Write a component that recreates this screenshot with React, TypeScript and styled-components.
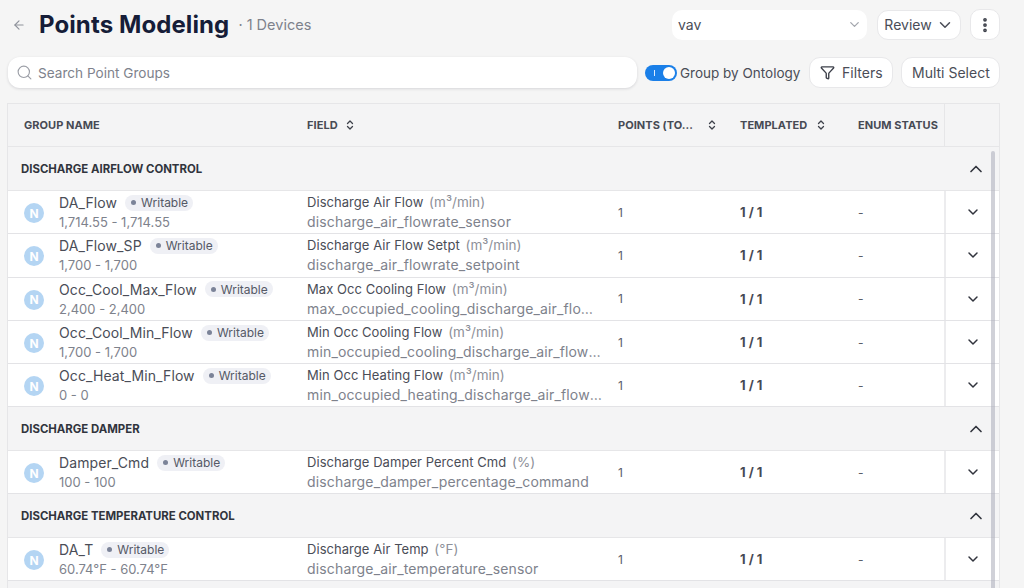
import React from "react";
import styled, { createGlobalStyle } from "styled-components";
import { ArrowLeft, ChevronDown, ChevronUp, ChevronsUpDown, Search, Funnel, EllipsisVertical } from "lucide-react";

const GlobalStyle = createGlobalStyle`
  html, body {
    margin: 0;
    padding: 0;
    height: 100%;
    background: #f5f5f5;
    font-family: Inter, "Noto Sans", "Liberation Sans", sans-serif;
    overflow: hidden;
  }
  * { box-sizing: border-box; }
`;

const groups = [
  {
    name: "DISCHARGE AIRFLOW CONTROL",
    rows: [
      { name: "DA_Flow", range: "1,714.55 - 1,714.55", field: "Discharge Air Flow", unit: "(m³/min)", key: "discharge_air_flowrate_sensor" },
      { name: "DA_Flow_SP", range: "1,700 - 1,700", field: "Discharge Air Flow Setpt", unit: "(m³/min)", key: "discharge_air_flowrate_setpoint" },
      { name: "Occ_Cool_Max_Flow", range: "2,400 - 2,400", field: "Max Occ Cooling Flow", unit: "(m³/min)", key: "max_occupied_cooling_discharge_air_flowrate_setpoint" },
      { name: "Occ_Cool_Min_Flow", range: "1,700 - 1,700", field: "Min Occ Cooling Flow", unit: "(m³/min)", key: "min_occupied_cooling_discharge_air_flowrate_setpoint" },
      { name: "Occ_Heat_Min_Flow", range: "0 - 0", field: "Min Occ Heating Flow", unit: "(m³/min)", key: "min_occupied_heating_discharge_air_flowrate_setpoint" },
    ],
  },
  {
    name: "DISCHARGE DAMPER",
    rows: [
      { name: "Damper_Cmd", range: "100 - 100", field: "Discharge Damper Percent Cmd", unit: "(%)", key: "discharge_damper_percentage_command" },
    ],
  },
  {
    name: "DISCHARGE TEMPERATURE CONTROL",
    rows: [
      { name: "DA_T", range: "60.74°F - 60.74°F", field: "Discharge Air Temp", unit: "(°F)", key: "discharge_air_temperature_sensor" },
    ],
  },
];

const App = () => {
  return (
    <Page>
      <GlobalStyle />
      <TopBar>
        <TitleArea>
          <ArrowLeft size={14} color="#8f939c" strokeWidth={2} />
          <Title>Points Modeling</Title>
          <DeviceCount>· 1 Devices</DeviceCount>
        </TitleArea>
        <TopActions>
          <SelectBox>
            <span>vav</span>
            <ChevronDown size={15} color="#a3a6ad" />
          </SelectBox>
          <ReviewButton>
            Review
            <ChevronDown size={18} color="#4a4d57" />
          </ReviewButton>
          <MoreButton>
            <EllipsisVertical size={18} color="#3d404a" strokeWidth={3} />
          </MoreButton>
        </TopActions>
      </TopBar>
      <SearchRow>
        <SearchBox>
          <Search size={17} color="#9b9ea6" strokeWidth={1.6} />
          <span>Search Point Groups</span>
        </SearchBox>
        <ToggleGroup>
          <Toggle>
            <ToggleMark />
            <ToggleKnob />
          </Toggle>
          Group by Ontology
        </ToggleGroup>
        <FilterButton>
          <Funnel size={15} color="#3d404a" strokeWidth={2.2} />
          Filters
        </FilterButton>
        <MultiButton>Multi Select</MultiButton>
      </SearchRow>
      <Table>
        <HeadRow>
          <HeadCell $first>GROUP NAME</HeadCell>
          <HeadCell>
            FIELD
            <SortIcon $gap={6} />
          </HeadCell>
          <HeadCell>
            POINTS (TO...
            <SortIcon $gap={13} />
          </HeadCell>
          <HeadCell>
            TEMPLATED
            <SortIcon />
          </HeadCell>
          <HeadCell>ENUM STATUS</HeadCell>
          <ActionHead />
        </HeadRow>
        {groups.map((group) => (
          <div key={group.name}>
            <GroupRow>
              <GroupName>{group.name}</GroupName>
              <ChevronUp size={20} color="#31343d" />
            </GroupRow>
            {group.rows.map((row) => (
              <DataRow key={row.name}>
                <NameCell>
                  <NBadge>N</NBadge>
                  <NameStack>
                    <NameLine>
                      <PointName>{row.name}</PointName>
                      <WritableTag>
                        <TagDot />
                        Writable
                      </WritableTag>
                    </NameLine>
                    <SubText>{row.range}</SubText>
                  </NameStack>
                </NameCell>
                <FieldCell>
                  <FieldLine>
                    {row.field} <Unit>{row.unit}</Unit>
                  </FieldLine>
                  <FieldKey>{row.key}</FieldKey>
                </FieldCell>
                <PlainCell>1</PlainCell>
                <BoldCell>1 / 1</BoldCell>
                <PlainCell>-</PlainCell>
                <ActionCell>
                  <ChevronDown size={16} color="#31343d" strokeWidth={2.2} />
                </ActionCell>
              </DataRow>
            ))}
          </div>
        ))}
        <GroupRow />
        <ScrollThumb />
      </Table>
    </Page>
  );
};

const SortIcon = ({ $gap = 8 }: { $gap?: number }) => (
  <SortWrap $gap={$gap}>
    <ChevronsUpDown size={12} color="#3d404a" strokeWidth={2.6} />
  </SortWrap>
);

const Page = styled.main`
  width: 1024px;
  height: 588px;
  overflow: hidden;
  background: #f5f5f5;
  padding: 9px 24px 0 8px;
  color: #31343d;
`;

const TopBar = styled.header`
  display: flex;
  justify-content: space-between;
  align-items: center;
  height: 31px;
`;

const TitleArea = styled.div`
  display: flex;
  align-items: center;
  padding-left: 4px;
`;

const Title = styled.h1`
  margin: 0 0 0 13px;
  font-size: 24px;
  font-weight: 700;
  letter-spacing: 0.1px;
  color: #161d38;
`;

const DeviceCount = styled.span`
  margin-left: 9px;
  font-size: 14.5px;
  color: #7e828c;
`;

const TopActions = styled.div`
  display: flex;
  align-items: center;
  gap: 9px;
`;

const SelectBox = styled.div`
  width: 195px;
  height: 30px;
  margin-right: 1px;
  display: flex;
  align-items: center;
  justify-content: space-between;
  padding: 0 5px 0 6px;
  background: #fff;
  border-radius: 10px;
  font-size: 14px;
  color: #4a4d57;
`;

const ReviewButton = styled.div`
  width: 84px;
  height: 30px;
  display: flex;
  align-items: center;
  justify-content: center;
  gap: 4px;
  background: #fff;
  border: 1px solid #e8e8ea;
  border-radius: 11px;
  font-size: 14px;
  color: #4a4d57;
`;

const MoreButton = styled.div`
  width: 30px;
  height: 31px;
  display: flex;
  align-items: center;
  justify-content: center;
  background: #fff;
  border: 1px solid #e8e8ea;
  border-radius: 10px;
`;

const SearchRow = styled.div`
  display: flex;
  align-items: center;
  margin-top: 17px;
  height: 31px;
`;

const SearchBox = styled.div`
  flex: none;
  width: 629px;
  height: 31px;
  display: flex;
  align-items: center;
  gap: 5px;
  padding-left: 8px;
  background: #fff;
  border-radius: 12px;
  box-shadow: 0 1px 3px rgba(30, 30, 50, 0.14);
  font-size: 13.6px;
  color: #7e828c;
`;

const ToggleGroup = styled.div`
  display: flex;
  align-items: center;
  gap: 3px;
  margin-left: 8px;
  font-size: 13.5px;
  color: #4a4d57;
  white-space: nowrap;
`;

const Toggle = styled.div`
  position: relative;
  width: 32px;
  height: 16px;
  border-radius: 8px;
  background: #1a7fe8;
`;

const ToggleMark = styled.span`
  position: absolute;
  left: 9px;
  top: 5px;
  width: 1px;
  height: 6px;
  background: #dcecff;
`;

const ToggleKnob = styled.span`
  position: absolute;
  right: 2px;
  top: 2px;
  width: 12px;
  height: 12px;
  border-radius: 50%;
  background: #fff;
`;

const FilterButton = styled.div`
  flex: none;
  width: 84px;
  height: 31px;
  margin-left: 9px;
  display: flex;
  align-items: center;
  justify-content: center;
  gap: 7px;
  background: #fff;
  border: 1px solid #e8e8ea;
  border-radius: 11px;
  font-size: 14px;
  color: #4a4d57;
`;

const MultiButton = styled.div`
  flex: none;
  width: 99px;
  height: 31px;
  margin-left: 8px;
  display: flex;
  align-items: center;
  justify-content: center;
  background: #fff;
  border: 1px solid #e8e8ea;
  border-radius: 11px;
  font-size: 14px;
  color: #4a4d57;
`;

const Table = styled.section`
  position: relative;
  margin-top: 15px;
  margin-left: -1px;
  width: 993px;
  border: 1px solid #e6e6e8;
  border-bottom: 0;
  background: #f4f4f5;
`;

const columns = "299px 311px 122px 118px 86px 56px";

const HeadRow = styled.div`
  display: grid;
  grid-template-columns: ${columns};
  height: 43.4px;
  border-bottom: 1px solid #e6e6e8;
`;

const HeadCell = styled.div<{ $first?: boolean }>`
  display: flex;
  align-items: center;
  padding-left: ${(props) => (props.$first ? "16px" : "0")};
  font-size: 11px;
  font-weight: 700;
  letter-spacing: 0.05px;
  color: #474a54;
  white-space: nowrap;
`;

const ActionHead = styled.div`
  border-left: 1px solid #e6e6e8;
`;

const SortWrap = styled.span<{ $gap: number }>`
  display: inline-flex;
  margin-left: ${(props) => props.$gap}px;
`;

const GroupRow = styled.div`
  height: 43.6px;
  display: flex;
  align-items: center;
  justify-content: space-between;
  padding: 0 13px;
  border-bottom: 1px solid #e6e6e8;
`;

const GroupName = styled.div`
  margin-top: 1px;
  font-size: 11.4px;
  font-weight: 700;
  color: #31343d;
`;

const DataRow = styled.div`
  display: grid;
  grid-template-columns: ${columns};
  height: 43.3px;
  background: #fff;
  border-bottom: 1px solid #e3e3e6;
`;

const NameCell = styled.div`
  display: flex;
  align-items: center;
  gap: 15px;
  padding-left: 16px;
`;

const NBadge = styled.div`
  width: 20px;
  height: 20px;
  margin-top: 2px;
  flex: none;
  display: flex;
  align-items: center;
  justify-content: center;
  border-radius: 50%;
  background: #b4d5f3;
  color: #fff;
  font-size: 12px;
  font-weight: 700;
`;

const NameStack = styled.div`
  display: flex;
  flex-direction: column;
  gap: 3px;
`;

const NameLine = styled.div`
  display: flex;
  align-items: center;
  gap: 8px;
  height: 17px;
`;

const PointName = styled.span`
  font-size: 14px;
  letter-spacing: 0.1px;
  color: #4a4d57;
`;

const WritableTag = styled.span`
  display: inline-flex;
  align-items: center;
  gap: 5px;
  height: 16px;
  padding: 0 5px 0 6px;
  border-radius: 8px;
  background: #eff0f5;
  font-size: 12px;
  color: #555966;
`;

const TagDot = styled.i`
  width: 5px;
  height: 5px;
  border-radius: 50%;
  background: #7b8398;
`;

const SubText = styled.div`
  font-size: 13px;
  line-height: 16px;
  color: #7e828c;
`;

const FieldCell = styled.div`
  display: flex;
  flex-direction: column;
  justify-content: center;
  gap: 3px;
  min-width: 0;
  padding-right: 14px;
`;

const FieldLine = styled.div`
  font-size: 13px;
  line-height: 17px;
  letter-spacing: 0.05px;
  color: #4a4d57;
  white-space: nowrap;
`;

const Unit = styled.span`
  margin-left: 2px;
  font-size: 13.5px;
  color: #8d9099;
`;

const FieldKey = styled.div`
  font-size: 14px;
  line-height: 16px;
  letter-spacing: 0.15px;
  color: #7e828c;
  white-space: nowrap;
  overflow: hidden;
  text-overflow: ellipsis;
`;

const PlainCell = styled.div`
  display: flex;
  align-items: center;
  font-size: 12px;
  color: #5b5e68;
`;

const BoldCell = styled.div`
  display: flex;
  align-items: center;
  font-size: 13px;
  font-weight: 700;
  color: #474a54;
`;

const ActionCell = styled.div`
  display: flex;
  align-items: center;
  padding-left: 19px;
  border-left: 2px solid #ececee;
`;

const ScrollThumb = styled.div`
  position: absolute;
  top: 47px;
  right: 4px;
  bottom: 0;
  width: 4px;
  border-radius: 2px;
  background: rgba(170, 172, 184, 0.55);
`;

export default App;
